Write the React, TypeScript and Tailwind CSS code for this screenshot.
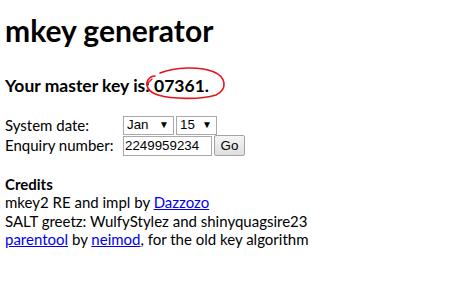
import React from "react";

function Select({ value, width }: { value: string; width: string }) {
  return (
    <div
      className={`flex h-[19px] items-center justify-between border border-[#a9a9a9] bg-white pl-[3px] pr-[4px] text-[13.33px] leading-none text-black ${width}`}
      style={{ fontFamily: '"Liberation Sans", Arial, sans-serif' }}
    >
      <span>{value}</span>
      <span className="text-[10px]">▼</span>
    </div>
  );
}

export default function App() {
  return (
    <div
      className="relative h-[295px] w-[471px] bg-white pl-[5px] text-black"
      style={{ fontFamily: 'Lato, "Open Sans", sans-serif' }}
    >
      <h1 className="pt-[12px] text-[30px] font-bold leading-[36px]">mkey generator</h1>
      <p className="mt-[27px] text-[17.5px] font-bold leading-[22px]">Your master key is: 07361.</p>

      <div className="mt-[18px] grid grid-cols-[118px_auto] text-[15px] leading-[18.3px]">
        <div className="flex h-[20px] items-center">System date:</div>
        <div className="flex h-[20px] items-center gap-[2px]">
          <Select value="Jan" width="w-[51px]" />
          <Select value="15" width="w-[41px]" />
        </div>
        <div className="flex h-[21px] items-center">Enquiry number:</div>
        <div className="flex h-[21px] items-center gap-[2px]">
          <div
            className="flex h-[20px] w-[89px] items-center border border-[#a9a9a9] bg-white pl-[1px] text-[13.33px] leading-none"
            style={{ fontFamily: '"Liberation Sans", Arial, sans-serif' }}
          >
            2249959234
          </div>
          <div
            className="flex h-[21px] w-[31px] items-center justify-center rounded-[2px] border border-[#a3a3a3] bg-gradient-to-b from-[#f6f6f6] to-[#dedede] text-[13.33px] leading-none"
            style={{ fontFamily: '"Liberation Sans", Arial, sans-serif' }}
          >
            Go
          </div>
        </div>
      </div>

      <div className="mt-[19px] text-[15px] leading-[18.4px]">
        <div className="font-bold">Credits</div>
        <div>
          mkey2 RE and impl by <a className="text-[#0000ee] underline">Dazzozo</a>
        </div>
        <div>SALT greetz: WulfyStylez and shinyquagsire23</div>
        <div>
          <a className="text-[#0000ee] underline">parentool</a> by{" "}
          <a className="text-[#0000ee] underline">neimod</a>, for the old key algorithm
        </div>
      </div>

      <svg
        className="pointer-events-none absolute left-0 top-0"
        width="471"
        height="295"
        viewBox="0 0 471 295"
      >
        <path
          d="M160 73 C 175 67, 200 66, 214 72 C 226 77, 228 89, 216 95 C 200 100, 172 99, 158 95 C 148 92, 145 85, 148 80 C 150 77, 153 76, 155 76"
          fill="none"
          stroke="#e8141b"
          strokeWidth="1.6"
          strokeLinecap="round"
        />
        <path d="M147 84 L 152 79" fill="none" stroke="#e8141b" strokeWidth="1.4" strokeLinecap="round" />
      </svg>
    </div>
  );
}
